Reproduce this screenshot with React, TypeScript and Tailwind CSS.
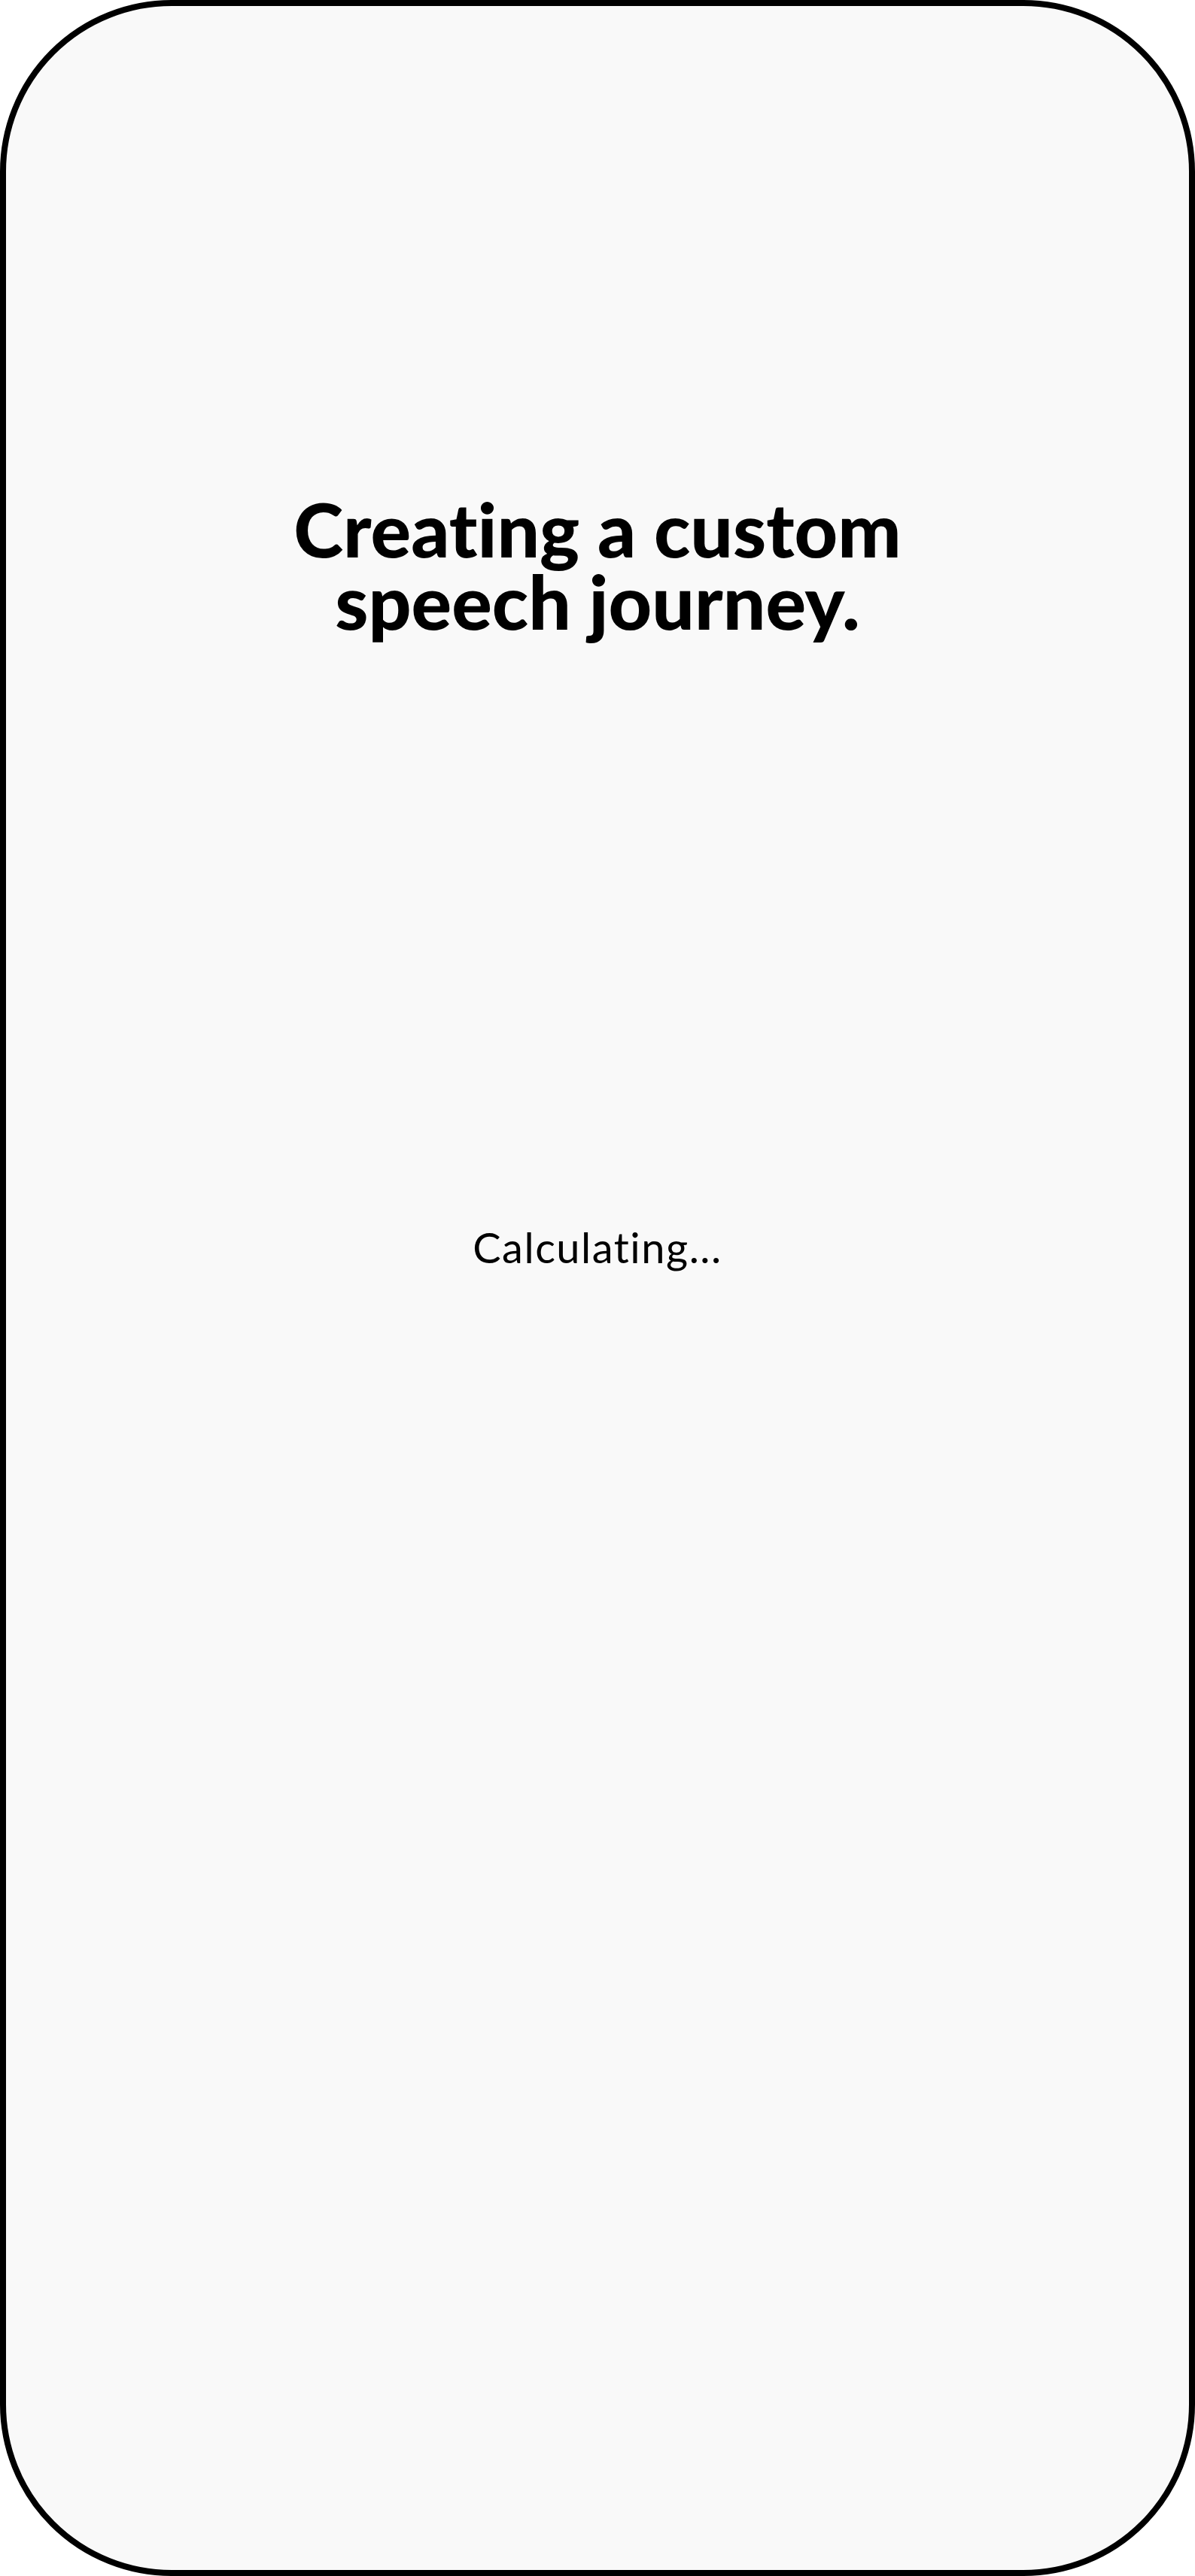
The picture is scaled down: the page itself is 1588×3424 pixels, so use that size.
export default function App() {
  return (
    <div className="min-h-screen bg-white">
      <div className="flex h-[3424px] w-[1588px] flex-col items-center rounded-[228px] border-8 border-black bg-[#f9f9f9] pt-[646px] font-['Lato','Liberation_Sans',sans-serif] text-black [font-variant-ligatures:none]">
        <h1 className="text-center text-[100px] font-black leading-[96px]">
          Creating a custom
          <br />
          speech journey.
        </h1>
        <p className="mt-[778px] text-[56px] leading-[67px] tracking-[1.5px]">Calculating...</p>
      </div>
    </div>
  )
}
